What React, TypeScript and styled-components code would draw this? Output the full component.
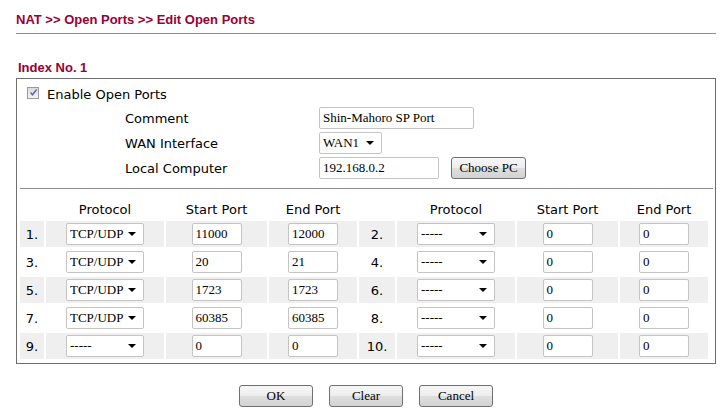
import { Fragment } from 'react';
import styled, { createGlobalStyle } from 'styled-components';

const GlobalStyle = createGlobalStyle`
  body {
    margin: 0;
    background: #ffffff;
    font-family: "DejaVu Sans", Verdana, sans-serif;
    color: #000000;
  }
`;

const Page = styled.div`
  width: 700px;
  padding-left: 16px;
`;

const TitleBar = styled.div`
  padding: 12px 0 6px 0;
  line-height: 15px;
  border-bottom: 1px solid #8c8c8c;
  font-family: "Liberation Sans", Arial, sans-serif;
  font-weight: bold;
  font-size: 13px;
  color: #990033;
`;

const Heading = styled.div`
  margin: 26px 0 3px 2px;
  line-height: 15px;
  font-family: "Liberation Sans", Arial, sans-serif;
  font-weight: bold;
  font-size: 13px;
  color: #990033;
`;

const Box = styled.div`
  border: 1px solid #6e6e6e;
  padding-bottom: 2px;
`;

const EnableRow = styled.label`
  display: flex;
  align-items: center;
  gap: 8px;
  height: 20px;
  margin: 5px 0 3px 10px;
  font-size: 13px;
`;

const CheckBox = styled.span`
  width: 10px;
  height: 10px;
  margin-top: -3px;
  border: 1px solid #9a9a9a;
  background: linear-gradient(#dcdcdc, #f4f4f4);
  display: flex;
  align-items: center;
  justify-content: center;
`;

const FormGrid = styled.div`
  display: grid;
  grid-template-columns: 194px auto;
  row-gap: 3px;
  margin-left: 108px;
`;

const FormLabel = styled.div`
  display: flex;
  align-items: center;
  height: 22px;
  font-size: 13px;
`;

const FieldCell = styled.div`
  display: flex;
  align-items: center;
  gap: 12px;
  height: 22px;
`;

const TextBox = styled.div<{ $w: number }>`
  box-sizing: border-box;
  width: ${(p) => p.$w}px;
  height: 22px;
  padding: 0 3px;
  display: flex;
  align-items: center;
  border: 1px solid #c4c4c4;
  border-radius: 2px;
  background: #ffffff;
  font-family: "Liberation Serif", "Times New Roman", serif;
  font-size: 13px;
  white-space: nowrap;
  overflow: hidden;
`;

const SelectBox = styled.div<{ $w: number }>`
  box-sizing: border-box;
  width: ${(p) => p.$w}px;
  height: 22px;
  padding: 0 7px 0 3px;
  display: flex;
  align-items: center;
  justify-content: space-between;
  border: 1px solid #c4c4c4;
  border-radius: 2px;
  background: #ffffff;
  font-family: "Liberation Serif", "Times New Roman", serif;
  font-size: 13px;
  white-space: nowrap;
`;

const Arrow = styled.span`
  width: 0;
  height: 0;
  border-left: 4px solid transparent;
  border-right: 4px solid transparent;
  border-top: 4px solid #000000;
`;

const Button = styled.button<{ $w?: number }>`
  box-sizing: border-box;
  width: ${(p) => p.$w ?? 74}px;
  height: 22px;
  padding: 0;
  border: 1px solid #707070;
  border-radius: 3px;
  background: linear-gradient(#f6f6f6 0%, #ededed 50%, #dedede 51%, #d3d3d3 100%);
  font-family: "Liberation Serif", "Times New Roman", serif;
  font-size: 13px;
  color: #000000;
`;

const Separator = styled.div`
  height: 1px;
  margin: 9px 2px 0 3px;
  background: #8c8c8c;
`;

const PortGrid = styled.div`
  display: grid;
  grid-template-columns: 24px 118px 101px 88px 36px 118px 101px 88px;
  gap: 2px;
  padding: 2px;
  margin: 8px 0 0 1px;
`;

const HeadCell = styled.div`
  height: 20px;
  display: flex;
  align-items: center;
  justify-content: center;
  font-size: 13px;
`;

const Cell = styled.div<{ $shade: boolean }>`
  height: 26px;
  display: flex;
  align-items: center;
  justify-content: center;
  background: ${(p) => (p.$shade ? '#efefef' : '#ffffff')};
  font-size: 13px;
`;

const ButtonRow = styled.div`
  display: flex;
  justify-content: center;
  gap: 16px;
  margin-top: 21px;
`;

type Rule = { no: number; proto: string; start: string; end: string };

const rules: Rule[] = [
  { no: 1, proto: 'TCP/UDP', start: '11000', end: '12000' },
  { no: 2, proto: '-----', start: '0', end: '0' },
  { no: 3, proto: 'TCP/UDP', start: '20', end: '21' },
  { no: 4, proto: '-----', start: '0', end: '0' },
  { no: 5, proto: 'TCP/UDP', start: '1723', end: '1723' },
  { no: 6, proto: '-----', start: '0', end: '0' },
  { no: 7, proto: 'TCP/UDP', start: '60385', end: '60385' },
  { no: 8, proto: '-----', start: '0', end: '0' },
  { no: 9, proto: '-----', start: '0', end: '0' },
  { no: 10, proto: '-----', start: '0', end: '0' },
];

function RuleCells({ rule, shade }: { rule: Rule; shade: boolean }) {
  return (
    <>
      <Cell $shade={shade}>{rule.no}.</Cell>
      <Cell $shade={shade}>
        <SelectBox $w={78}>
          <span>{rule.proto}</span>
          <Arrow />
        </SelectBox>
      </Cell>
      <Cell $shade={shade}>
        <TextBox $w={50}>{rule.start}</TextBox>
      </Cell>
      <Cell $shade={shade}>
        <TextBox $w={50}>{rule.end}</TextBox>
      </Cell>
    </>
  );
}

function App() {
  const pairs = [0, 2, 4, 6, 8];
  return (
    <Page>
      <GlobalStyle />
      <TitleBar>NAT &gt;&gt; Open Ports &gt;&gt; Edit Open Ports</TitleBar>
      <Heading>Index No. 1</Heading>
      <Box>
        <EnableRow>
          <CheckBox>
            <svg width="9" height="9" viewBox="0 0 9 9">
              <path d="M1.5 4.5 L3.5 6.8 L7.6 1.6" fill="none" stroke="#5a6fb8" strokeWidth="1.6" />
            </svg>
          </CheckBox>
          Enable Open Ports
        </EnableRow>
        <FormGrid>
          <FormLabel>Comment</FormLabel>
          <FieldCell>
            <TextBox $w={155}>Shin-Mahoro SP Port</TextBox>
          </FieldCell>
          <FormLabel>WAN Interface</FormLabel>
          <FieldCell>
            <SelectBox $w={63}>
              <span>WAN1</span>
              <Arrow />
            </SelectBox>
          </FieldCell>
          <FormLabel>Local Computer</FormLabel>
          <FieldCell>
            <TextBox $w={120}>192.168.0.2</TextBox>
            <Button $w={75}>Choose PC</Button>
          </FieldCell>
        </FormGrid>
        <Separator />
        <PortGrid>
          <HeadCell />
          <HeadCell>Protocol</HeadCell>
          <HeadCell>Start Port</HeadCell>
          <HeadCell>End Port</HeadCell>
          <HeadCell />
          <HeadCell>Protocol</HeadCell>
          <HeadCell>Start Port</HeadCell>
          <HeadCell>End Port</HeadCell>
          {pairs.map((i, row) => (
            <Fragment key={i}>
              <RuleCells rule={rules[i]} shade={row % 2 === 0} />
              <RuleCells rule={rules[i + 1]} shade={row % 2 === 0} />
            </Fragment>
          ))}
        </PortGrid>
      </Box>
      <ButtonRow>
        <Button>OK</Button>
        <Button>Clear</Button>
        <Button>Cancel</Button>
      </ButtonRow>
    </Page>
  );
}

export default App;
